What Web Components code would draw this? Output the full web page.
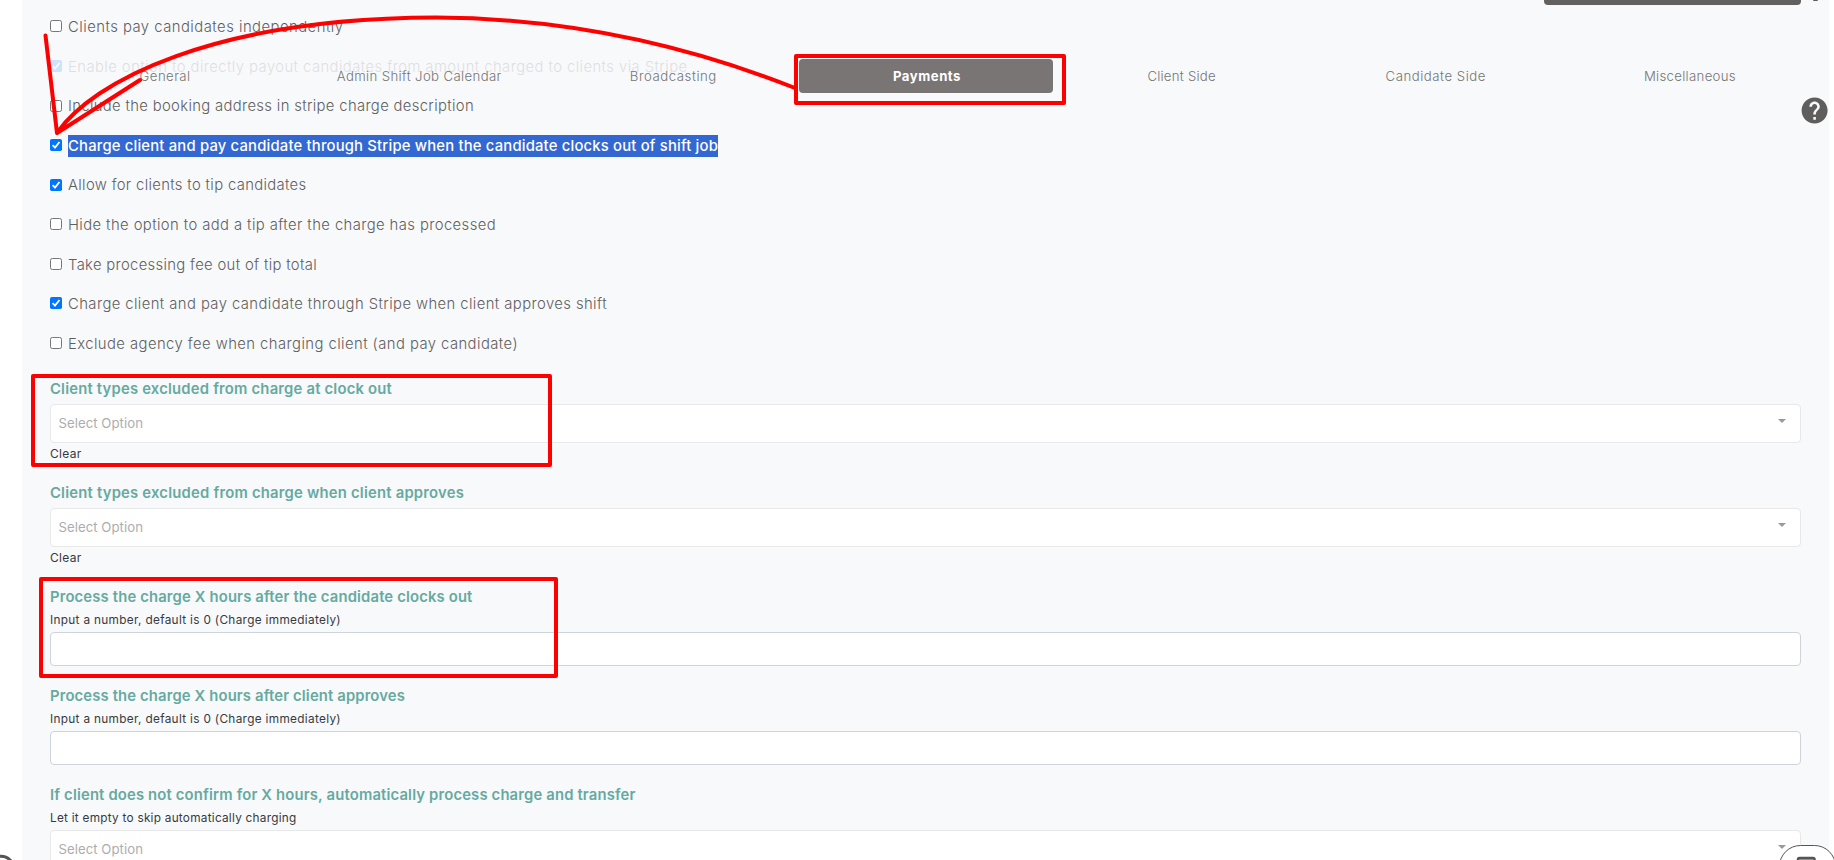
<!DOCTYPE html>
<html lang="en">
<head>
<meta charset="utf-8">
<title>Payment settings</title>
<style>
  body { margin: 0; background: #fff; font-family: Inter, "Open Sans", sans-serif; height: 860px; overflow: hidden; }
</style>
</head>
<body>
<settings-page></settings-page>

<script>
(() => {
  const define = (name, cls) => { if (!customElements.get(name)) customElements.define(name, cls); };
  const shadow = (el, html) => { el.attachShadow({ mode: 'open' }).innerHTML = html; };

  // <fit-text w="120">label</fit-text> — one line of text tracked to w pixels
  class FitText extends HTMLElement {
    connectedCallback() {
      if (this.shadowRoot) return;
      shadow(this, `<style>
        :host { display: inline-block; white-space: nowrap; }
        span { display: inline-block; }
      </style><span><slot></slot></span>`);
      const w = Number(this.getAttribute('w'));
      const span = this.shadowRoot.querySelector('span');
      const natural = span.getBoundingClientRect().width;
      if (w && natural) span.style.letterSpacing = (w - natural) / this.textContent.length + 'px';
    }
  }

  class CheckRow extends HTMLElement {
    connectedCallback() {
      const on = this.hasAttribute('checked');
      shadow(this, `<style>
        :host { display: flex; align-items: center; height: 39.58px; color: #5e5e5e; font-size: 14.8px; font-weight: 350; line-height: 22px; }
        :host([faded]) { opacity: .17; }
        svg { width: 12px; height: 12px; flex: none; margin: 0 6px 0 0; }
        .text { display: flex; height: 22px; margin-top: 1.6px; }
        :host([selected]) .text { background: #3367d1; color: #fff; font-weight: 500; }
      </style>
      <svg viewBox="0 0 12 12" role="checkbox" aria-checked="${on}">${on
        ? '<rect width="12" height="12" rx="1.8" fill="#0075ff"/><path d="M2.6 6.2 5 8.6 9.5 3" fill="none" stroke="#fff" stroke-width="1.8"/>'
        : '<rect x=".5" y=".5" width="11" height="11" rx="1.8" fill="#fff" stroke="#767676"/>'}</svg>
      <div class="text"><fit-text w="${this.getAttribute('w')}">${this.textContent}</fit-text></div>`);
    }
  }

  class SelectBox extends HTMLElement {
    connectedCallback() {
      shadow(this, `<style>
        :host { display: flex; justify-content: space-between; box-sizing: border-box; height: 39px; padding: 0 14px 0 7.5px;
          border: 1px solid #e8e8e8; border-radius: 4px; background: #fff; color: #adadad; font-size: 13.2px; line-height: 36px; }
        i { width: 0; height: 0; margin-top: 14px; border: 4px solid transparent; border-top-color: #999; border-bottom: 0; }
      </style><fit-text w="84.5">Select Option</fit-text><i></i>`);
    }
  }

  class FormField extends HTMLElement {
    connectedCallback() {
      const a = (n) => this.getAttribute(n);
      shadow(this, `<style>
        :host { display: block; height: 99px; color: #363a40; font-size: 12px; }
        :host([clear]) { height: 104px; }
        .title { height: 25px; line-height: 21px; font-size: 14.8px; font-weight: 600; color: #66a9a1; }
        .hint { height: 20px; line-height: 19px; margin-top: -1px; font-size: 11.8px; }
        .hint + * { margin-top: 1px; }
        .input { box-sizing: border-box; height: 34px; border: 1px solid #ced4da; border-radius: 4px; background: #fff; }
        .clear { height: 22px; line-height: 22px; }
      </style>
      <div class="title"><fit-text w="${a('w')}">${a('label')}</fit-text></div>
      ${a('hint') ? `<div class="hint"><fit-text w="${a('hw')}">${a('hint')}</fit-text></div>` : ''}
      ${this.hasAttribute('select') ? '<select-box></select-box>' : '<div class="input"></div>'}
      ${this.hasAttribute('clear') ? '<div class="clear"><fit-text w="31.5">Clear</fit-text></div>' : ''}`);
    }
  }

  class TabBar extends HTMLElement {
    connectedCallback() {
      const tabs = [['General', 51], ['Admin Shift Job Calendar', 165], ['Broadcasting', 87], ['Payments', 68],
        ['Client Side', 68.5], ['Candidate Side', 100.5], ['Miscellaneous', 92]];
      shadow(this, `<style>
        :host { display: grid; grid-template-columns: repeat(7, 1fr); height: 34px; line-height: 34px; font-size: 13.2px; font-weight: 350; color: #757575; text-align: center; }
        .on { margin: 0 2px 0 -1px; padding-left: 2px; background: #797575; color: #fff; border-radius: 4px; font-weight: 700; }
      </style>${tabs.map(([t, w]) => `<div class="${t === 'Payments' ? 'on' : ''}"><fit-text w="${w}">${t}</fit-text></div>`).join('')}`);
    }
  }

  class HelpIcon extends HTMLElement {
    connectedCallback() {
      shadow(this, `<style>:host { display: block; width: 31.2px; height: 31.2px; } svg { display: block; }</style>
      <svg width="31.2" height="31.2" viewBox="0 0 24 24" fill="#605e5c"><path d="M12 2C6.48 2 2 6.48 2 12s4.48 10 10 10 10-4.48 10-10S17.52 2 12 2zm1 17h-2v-2h2v2zm2.07-7.75-.9.92C13.45 12.9 13 13.5 13 15h-2v-.5c0-1.1.45-2.1 1.17-2.83l1.24-1.26c.37-.36.59-.86.59-1.41 0-1.1-.9-2-2-2s-2 .9-2 2H8c0-2.21 1.79-4 4-4s4 1.79 4 4c0 .88-.36 1.68-.93 2.25z"/></svg>`);
    }
  }

  // Red pen marks drawn over the page
  class PenMarks extends HTMLElement {
    connectedCallback() {
      shadow(this, `<style>:host { display: block; pointer-events: none; } svg { display: block; }</style>
      <svg width="1834" height="860" fill="none" stroke="#f00" stroke-width="4" stroke-linejoin="round" stroke-linecap="round">
        <rect x="796" y="56" width="268" height="47"/>
        <rect x="33" y="376" width="517" height="89"/>
        <rect x="41" y="579" width="515" height="97"/>
        <path d="M57 133C92 82 212 18 436 17.5C566 18 684 44 795 88M45.5 35.5 57 133 140 80"/>
      </svg>`);
    }
  }

  class SettingsPage extends HTMLElement {
    connectedCallback() {
      shadow(this, `<style>
        :host { display: block; position: relative; height: 860px; overflow: hidden; }
        main { box-sizing: border-box; height: 860px; margin: 0 5px 0 22px; padding: 6.6px 28px 0 28px; background: #f8f9fb; overflow: hidden; }
        .fields { margin-top: 16.2px; }
        tab-bar, help-icon, pen-marks, .save, .dot, .chat, .badge { position: absolute; }
        tab-bar { left: 38px; top: 59px; width: 1779px; }
        help-icon { left: 1798.7px; top: 95px; }
        pen-marks { left: 0; top: 0; }
        .save { left: 1544px; top: 0; width: 257px; height: 5px; border-radius: 0 0 4px 4px; background: #636060; }
        .dot { left: 1813px; top: 0; width: 5px; height: 1px; background: #605e5c; border-radius: 0 0 2px 2px; }
        .chat { left: 1779px; top: 845px; }
        .badge { left: 0; top: 850px; }
      </style>
      <main>
        <check-row w="275.5">Clients pay candidates independently</check-row>
        <check-row w="619.5" checked faded>Enable option to directly payout candidates from amount charged to clients via Stripe</check-row>
        <check-row w="406">Include the booking address in stripe charge description</check-row>
        <check-row w="650" checked selected>Charge client and pay candidate through Stripe when the candidate clocks out of shift job</check-row>
        <check-row w="238.5" checked>Allow for clients to tip candidates</check-row>
        <check-row w="428">Hide the option to add a tip after the charge has processed</check-row>
        <check-row w="249">Take processing fee out of tip total</check-row>
        <check-row w="539" checked>Charge client and pay candidate through Stripe when client approves shift</check-row>
        <check-row w="450">Exclude agency fee when charging client (and pay candidate)</check-row>
        <div class="fields">
          <form-field select clear w="342" label="Client types excluded from charge at clock out"></form-field>
          <form-field select clear w="414" label="Client types excluded from charge when client approves"></form-field>
          <form-field w="422.5" label="Process the charge X hours after the candidate clocks out" hw="291" hint="Input a number, default is 0 (Charge immediately)"></form-field>
          <form-field w="355" label="Process the charge X hours after client approves" hw="291" hint="Input a number, default is 0 (Charge immediately)"></form-field>
          <form-field select w="585.5" label="If client does not confirm for X hours, automatically process charge and transfer" hw="246.5" hint="Let it empty to skip automatically charging"></form-field>
        </div>
      </main>
      <tab-bar></tab-bar>
      <div class="save"></div>
      <div class="dot"></div>
      <help-icon></help-icon>
      <svg class="chat" width="55" height="15" fill="none" stroke="#555"><rect x=".5" y=".5" width="56" height="50" rx="21" fill="#fff"/><path d="M19 16v-1.5q0-1.5 1.5-1.5h13.5q1.5 0 1.5 1.5V16" fill="#aaa" stroke-width="2.5"/></svg>
      <svg class="badge" width="16" height="10" fill="none" stroke="#555" stroke-width="3"><circle cx="1" cy="19" r="12.8"/></svg>
      <pen-marks></pen-marks>`);
    }
  }

  define('fit-text', FitText);
  define('check-row', CheckRow);
  define('select-box', SelectBox);
  define('form-field', FormField);
  define('tab-bar', TabBar);
  define('help-icon', HelpIcon);
  define('pen-marks', PenMarks);
  define('settings-page', SettingsPage);
})();
</script>
</body>
</html>
